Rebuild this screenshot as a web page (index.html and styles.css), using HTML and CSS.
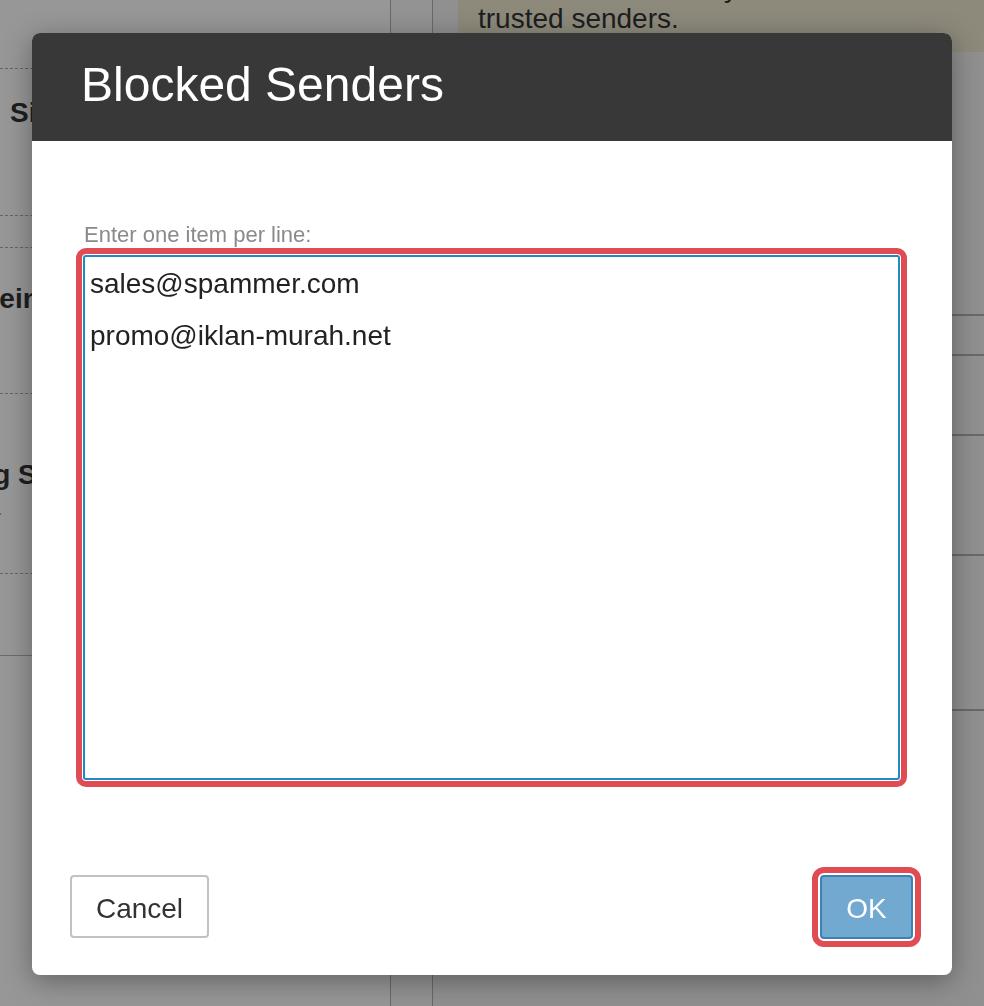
FILE: index.html
```html
<!DOCTYPE html>
<html lang="en">
<head>
<meta charset="utf-8">
<title>Blocked Senders</title>
<link rel="stylesheet" href="styles.css">
</head>
<body>
<div class="page">
  <aside class="side">
    <div class="blk blk1"></div>
    <div class="blk blk2"><h3 class="hd hd-a">Sicherheit</h3></div>
    <div class="blk blk3"></div>
    <div class="blk blk4"><h3 class="hd hd-b">Allgemein</h3></div>
    <div class="blk blk5"><h3 class="hd hd-c">Blocking Senders</h3><a class="lnk" href="#">Edit list.</a></div>
    <div class="blk blk6"></div>
  </aside>
  <div class="gutter"></div>
  <main class="main">
    <div class="note">Addresses are always<br>trusted senders.</div>
    <div class="rows">
      <div class="row r1"></div>
      <div class="row r2"></div>
      <div class="row r3"></div>
      <div class="row r4"></div>
      <div class="row r5"></div>
    </div>
  </main>
</div>
<div class="overlay"></div>
<div class="modal" role="dialog" aria-labelledby="mt">
  <header class="modal-head"><h2 id="mt" class="modal-title">Blocked Senders</h2></header>
  <div class="modal-body">
    <label class="field-label" for="list">Enter one item per line:</label>
    <textarea id="list" class="list">sales@spammer.com
promo@iklan-murah.net</textarea>
  </div>
  <footer class="modal-foot">
    <button class="btn btn-cancel" type="button">Cancel</button>
    <button class="btn btn-ok" type="button">OK</button>
  </footer>
</div>
</body>
</html>
```
FILE: styles.css
```css
html, body {
  margin: 0;
  padding: 0;
  height: 100%;
  overflow: hidden;
}
body {
  font-family: "Liberation Sans", Arial, sans-serif;
  background: #ffffff;
  color: #333;
}
.page {
  display: flex;
  height: 1006px;
}
.side {
  width: 390px;
  flex: none;
  display: flex;
  flex-direction: column;
  background: #fcfcfc;
}
.blk {
  border-bottom: 1px dashed #a8a8a8;
  box-sizing: border-box;
  overflow: visible;
}
.blk1 { height: 69px; }
.blk2 { height: 147px; padding-top: 28px; }
.blk3 { height: 32px; }
.blk4 { height: 146px; padding-top: 35px; }
.blk5 { height: 180px; padding-top: 65px; }
.blk6 { height: 82px; border-bottom: 1px solid #b4b4b4; }
.hd {
  margin: 0;
  font-size: 28px;
  font-weight: bold;
  line-height: 32px;
  white-space: nowrap;
  color: #333;
}
.hd-a { margin-left: 10px; }
.hd-b { margin-left: -94px; }
.hd-c { margin-left: -108px; }
.lnk {
  display: block;
  margin-left: -61px;
  margin-top: 8px;
  font-size: 18px;
  color: #1a5fa8;
  text-decoration: none;
  white-space: nowrap;
}
.gutter {
  width: 41px;
  flex: none;
  border-left: 1px solid #b0b0b0;
  border-right: 1px solid #b0b0b0;
  background: #f6f6f6;
}
.main {
  flex: 1;
  padding-left: 25px;
  display: flex;
  flex-direction: column;
  background: #f0f0f0;
}
.note {
  margin-top: -28px;
  background: #ebe6cf;
  padding: 0 20px 0 20px;
  height: 80px;
  box-sizing: border-box;
  font-size: 28px;
  line-height: 31px;
  white-space: nowrap;
  color: #333;
}
.rows {
  display: flex;
  flex-direction: column;
  margin-top: 262px;
}
.row { border-top: 2px solid #b0b0b0; }
.r1 { height: 38px; }
.r2 { height: 78px; }
.r3 { height: 118px; }
.r4 { height: 153px; }
.r5 { height: 100px; }

.overlay {
  position: fixed;
  inset: 0;
  background: rgba(0, 0, 0, 0.4);
}
.modal {
  position: absolute;
  left: 32px;
  top: 33px;
  width: 920px;
  height: 942px;
  background: #fff;
  border-radius: 8px;
  overflow: hidden;
  box-shadow: 0 6px 28px rgba(0, 0, 0, 0.35);
  display: flex;
  flex-direction: column;
}
.modal-head {
  height: 108px;
  flex: none;
  background: #383838;
  padding: 28px 0 0 49px;
  box-sizing: border-box;
}
.modal-title {
  margin: 0;
  font-size: 48px;
  line-height: 48px;
  font-weight: normal;
  color: #fff;
}
.modal-body {
  padding: 82px 52px 0 51px;
  display: flex;
  flex-direction: column;
  gap: 8px;
}
.field-label {
  font-size: 22px;
  line-height: 24px;
  color: #8a8a8a;
  padding-left: 1px;
}
.list {
  height: 525px;
  box-sizing: border-box;
  resize: none;
  margin: 0;
  padding: 1px 5px;
  border: 2px solid #1e8bc3;
  border-radius: 3px;
  outline: 6px solid #df4c54;
  outline-offset: 1px;
  font-family: "Liberation Sans", Arial, sans-serif;
  font-size: 28px;
  line-height: 52px;
  color: #222;
  background: #fff;
  overflow: hidden;
}
.modal-foot {
  margin-top: auto;
  padding: 0 39px 36px 38px;
  display: flex;
  justify-content: space-between;
  align-items: flex-end;
}
.btn {
  font-family: "Liberation Sans", Arial, sans-serif;
  font-size: 28px;
  border-radius: 4px;
  box-sizing: border-box;
  margin: 0;
  padding: 4px 0 0 0;
  cursor: pointer;
}
.btn-cancel {
  width: 139px;
  height: 63px;
  background: #fff;
  border: 2px solid #c2c2c2;
  color: #333;
  margin-bottom: 1px;
}
.btn-ok {
  width: 93px;
  height: 64px;
  background: #72a9d0;
  border: 2px solid #3b80b6;
  color: #fff;
  outline: 6px solid #df4c54;
  outline-offset: 2px;
}
```
